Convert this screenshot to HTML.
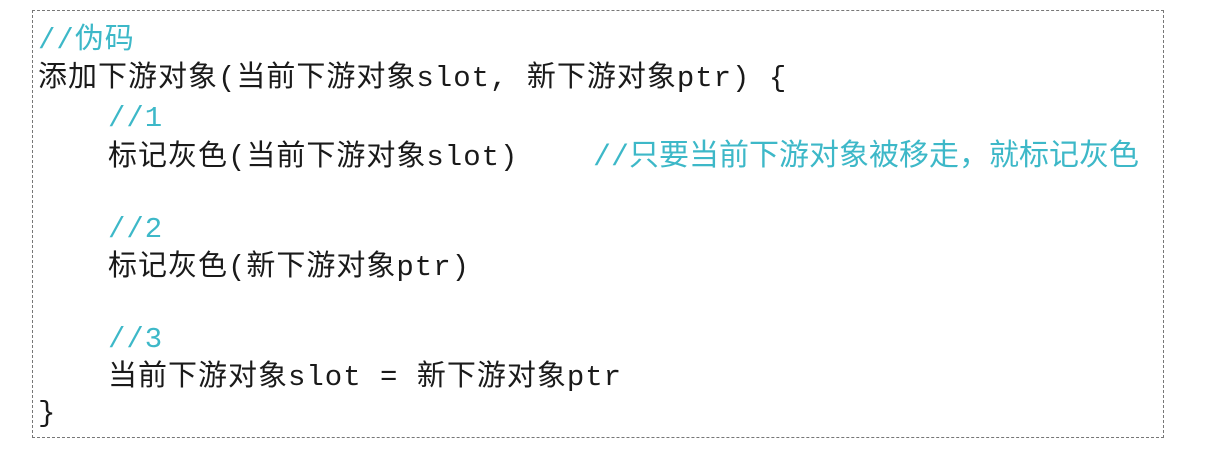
<!DOCTYPE html>
<html><head><meta charset="utf-8"><style>
body{margin:0;width:1207px;height:459px;background:#fff;position:relative;overflow:hidden;font-family:"Liberation Mono","Noto Sans CJK SC",monospace;font-size:29px;color:#1a1a1a}
.box{position:absolute;left:32px;top:10px;width:1130px;height:426px;border:1px dashed #777;}
.l{position:absolute;white-space:pre;line-height:36px;letter-spacing:1px}
.c{color:#3db8c8}
</style></head><body>
<div class="box"></div>
<div class="l c" style="left:38px;top:23px">//伪码</div>
<div class="l" style="left:38px;top:61px">添加下游对象(当前下游对象slot, 新下游对象ptr) {</div>
<div class="l c" style="left:108px;top:101px">//1</div>
<div class="l" style="left:108px;top:140px">标记灰色(当前下游对象slot)</div>
<div class="l c" style="left:593px;top:140px;font-size:30px;letter-spacing:0">//只要当前下游对象被移走，就标记灰色</div>
<div class="l c" style="left:108px;top:212px">//2</div>
<div class="l" style="left:108px;top:250px">标记灰色(新下游对象ptr)</div>
<div class="l c" style="left:108px;top:322px">//3</div>
<div class="l" style="left:108px;top:360px">当前下游对象slot = 新下游对象ptr</div>
<div class="l" style="left:38px;top:396px">}</div>
</body></html>
